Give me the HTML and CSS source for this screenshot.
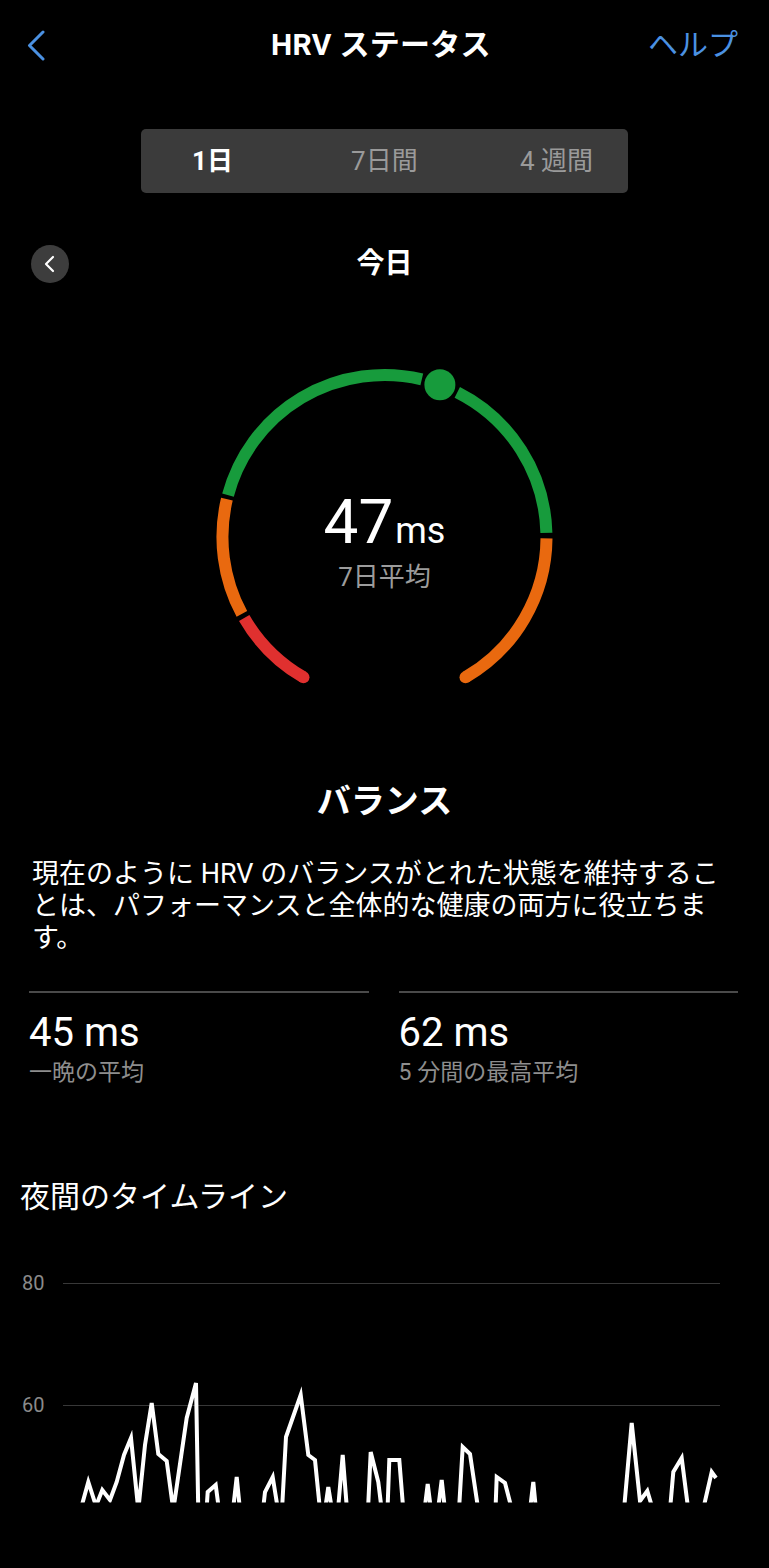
FILE: index.html
```html
<!DOCTYPE html>
<html lang="ja">
<head>
<meta charset="utf-8">
<title>HRVステータス</title>
<link rel="stylesheet" href="styles.css">
</head>
<body>
<div class="page">
  <header class="header">
    <svg class="back" width="22" height="32" viewBox="24 28 22 32"><polyline points="43,31 29.5,44.5 43,58" /></svg>
    <h1 class="title">HRV ステータス</h1>
    <span class="help">ヘルプ</span>
  </header>

  <nav class="tabs">
    <span class="tab active">1日</span>
    <span class="tab mid">7日間</span>
    <span class="tab">4 週間</span>
  </nav>

  <div class="date-row">
    <span class="circle-btn"><svg width="38" height="38" viewBox="0 0 38 38"><polyline points="22,12 15,19 22,26" /></svg></span>
    <span class="date">今日</span>
    <span></span>
  </div>

  <div class="gauge">
    <svg class="gauge-svg" width="769" height="447" viewBox="0 283 769 447">
      <path class="seg red" d="M 303.5 677.3 A 162 162 0 0 1 244.2 618" />
      <circle class="red-f" cx="303.5" cy="677.3" r="6" />
      <path class="seg orange" d="M 241.9 613.9 A 162 162 0 0 1 226.9 499.2" />
      <path class="seg green" d="M 228.0 495.1 A 162 162 0 0 1 421.8 379.3" />
      <path class="seg green" d="M 457.3 392.3 A 162 162 0 0 1 546.4 532.8" />
      <path class="seg orange" d="M 546.5 538.4 A 162 162 0 0 1 465.5 677.3" />
      <circle class="orange-f" cx="465.5" cy="677.3" r="6" />
      <circle class="green-f" cx="439.9" cy="384.8" r="15.5" />
    </svg>
    <div class="gauge-center">
      <div class="value"><span class="num">47</span><span class="unit">ms</span></div>
      <div class="sub">7日平均</div>
    </div>
  </div>

  <h2 class="status">バランス</h2>
  <p class="desc">現在のように HRV のバランスがとれた状態を維持することは、パフォーマンスと全体的な健康の両方に役立ちます。</p>

  <div class="stats">
    <div class="stat">
      <div class="stat-value">45 ms</div>
      <div class="stat-label">一晩の平均</div>
    </div>
    <div class="stat">
      <div class="stat-value">62 ms</div>
      <div class="stat-label">5 分間の最高平均</div>
    </div>
  </div>

  <h3 class="timeline-title">夜間のタイムライン</h3>

  <svg class="chart" width="769" height="353" viewBox="0 1215 769 353">
    <defs>
      <clipPath id="plot"><rect x="60" y="1215" width="700" height="287.5" /></clipPath>
    </defs>
    <text class="axis" x="22" y="1290">80</text>
    <text class="axis" x="22" y="1412">60</text>
    <line class="grid" x1="63" y1="1283.5" x2="720" y2="1283.5" />
    <line class="grid" x1="63" y1="1405.5" x2="720" y2="1405.5" />
    <g clip-path="url(#plot)">
      <polyline class="hrv" points="80,1512 88.3,1482 96,1506 102.3,1490 110,1500 116.7,1482 124,1455 131,1438 138.3,1510 145,1445 151.7,1403 158.3,1454 166.7,1461 173.3,1510 186.7,1418 196,1383 198.3,1512" />
      <polyline class="hrv" points="206.5,1510 207.7,1492 215.7,1485 219,1510" />
      <polyline class="hrv" points="233,1510 236.7,1477 240,1510" />
      <polyline class="hrv" points="263,1510 265,1492 272.7,1477 278,1510 282,1510 286,1437 300.7,1395 308.3,1455 315,1460 320,1510" />
      <polyline class="hrv" points="325,1510 328.3,1487 332,1510" />
      <polyline class="hrv" points="338,1510 342.7,1455 347,1510" />
      <polyline class="hrv" points="368,1510 370.7,1452 378.3,1482 381.7,1510" />
      <polyline class="hrv" points="387.5,1510 389.3,1460 399.3,1460 403.3,1510" />
      <polyline class="hrv" points="424.5,1510 427.7,1484 431,1510" />
      <polyline class="hrv" points="438,1510 441.7,1480 445,1510" />
      <polyline class="hrv" points="459,1510 462.7,1447 470,1454 478.3,1510" />
      <polyline class="hrv" points="495.5,1510 496.7,1477 505,1483 512,1510" />
      <polyline class="hrv" points="530,1510 533.3,1482 536,1510" />
      <polyline class="hrv" points="624,1510 631.7,1423 640,1501 647.3,1491 653,1510" />
      <polyline class="hrv" points="670,1510 673.3,1472 681.7,1458 688.3,1510" />
      <polyline class="hrv" points="703,1510 711.7,1472 716,1478" />
    </g>
  </svg>
</div>
</body>
</html>
```

FILE: styles.css
```css
html, body {
  margin: 0;
  padding: 0;
  background: #000;
}
body {
  font-family: Roboto, "Noto Sans CJK JP", sans-serif;
  color: #fff;
  width: 769px;
  overflow: hidden;
}
.page {
  width: 769px;
  height: 1568px;
  overflow: hidden;
}
.header {
  height: 90px;
  display: grid;
  grid-template-columns: 1fr auto 1fr;
  align-items: center;
  padding: 0 31px 0 24px;
}
.back {
  display: block;
}
.back polyline {
  fill: none;
  stroke: #4b91e2;
  stroke-width: 3;
  stroke-linecap: round;
  stroke-linejoin: round;
}
.title {
  margin: 0;
  font-size: 30px;
  font-weight: 700;
  line-height: 36px;
  white-space: nowrap;
  letter-spacing: 0.3px;
}
.help {
  justify-self: end;
  color: #4b91e2;
  font-size: 30px;
  line-height: 36px;
}
.tabs {
  box-sizing: border-box;
  width: 487px;
  height: 64px;
  margin: 39px auto 0;
  background: #3b3b3b;
  border-radius: 5px;
  display: flex;
  align-items: center;
  justify-content: space-between;
  padding: 0 35px 0 51px;
}
.tab {
  font-size: 26px;
  color: #9a9a9a;
  line-height: 32px;
}
.tab.mid {
  margin-left: 16px;
}
.tab.active {
  color: #fff;
  font-weight: 700;
}
.date-row {
  margin-top: 52px;
  height: 38px;
  display: grid;
  grid-template-columns: 38px 1fr 38px;
  align-items: center;
  padding: 0 31px;
}
.circle-btn {
  width: 38px;
  height: 38px;
  border-radius: 50%;
  background: #3d3d3d;
  display: block;
}
.circle-btn svg {
  display: block;
}
.circle-btn polyline {
  fill: none;
  stroke: #fff;
  stroke-width: 2.2;
  stroke-linecap: round;
  stroke-linejoin: round;
}
.date {
  text-align: center;
  font-size: 28px;
  font-weight: 700;
  line-height: 36px;
}
.gauge {
  position: relative;
  height: 447px;
}
.gauge-svg {
  display: block;
}
.seg {
  fill: none;
  stroke-width: 12;
}
.seg.red { stroke: #e0302f; }
.seg.orange { stroke: #e9690f; }
.seg.green { stroke: #179b3c; }
.red-f { fill: #e0302f; }
.orange-f { fill: #e9690f; }
.green-f { fill: #179b3c; }
.gauge-center {
  position: absolute;
  left: 0;
  right: 0;
  top: 208px;
  text-align: center;
}
.value {
  line-height: 62px;
  height: 62px;
}
.num {
  font-size: 62px;
}
.unit {
  font-size: 36px;
  margin-left: 2px;
}
.sub {
  margin-top: 9px;
  font-size: 26px;
  line-height: 30px;
  color: #9c9c9c;
}
.status {
  margin: 51px 0 0;
  text-align: center;
  font-size: 34px;
  font-weight: 700;
  line-height: 40px;
}
.desc {
  margin: 37px 0 0 32px;
  width: 690px;
  font-size: 27px;
  line-height: 32px;
  line-break: strict;
}
.stats {
  margin-top: 37px;
  display: grid;
  grid-template-columns: 1fr 1fr;
  column-gap: 30px;
  padding: 0 31px 0 29px;
}
.stat {
  border-top: 2px solid #4a4a4a;
  padding-top: 17px;
}
.stat-value {
  font-size: 40px;
  line-height: 46px;
}
.stat-label {
  margin-top: 3px;
  font-size: 23px;
  line-height: 28px;
  color: #8e8e8e;
}
.timeline-title {
  margin: 92px 0 0 20px;
  font-size: 30px;
  font-weight: 400;
  line-height: 36px;
}
.chart {
  display: block;
}
.axis {
  font-family: Roboto, sans-serif;
  font-size: 20px;
  fill: #8a8a8a;
}
.grid {
  stroke: #383838;
  stroke-width: 1;
}
.hrv {
  fill: none;
  stroke: #fff;
  stroke-width: 4;
  stroke-linejoin: miter;
  stroke-miterlimit: 6;
}
```
